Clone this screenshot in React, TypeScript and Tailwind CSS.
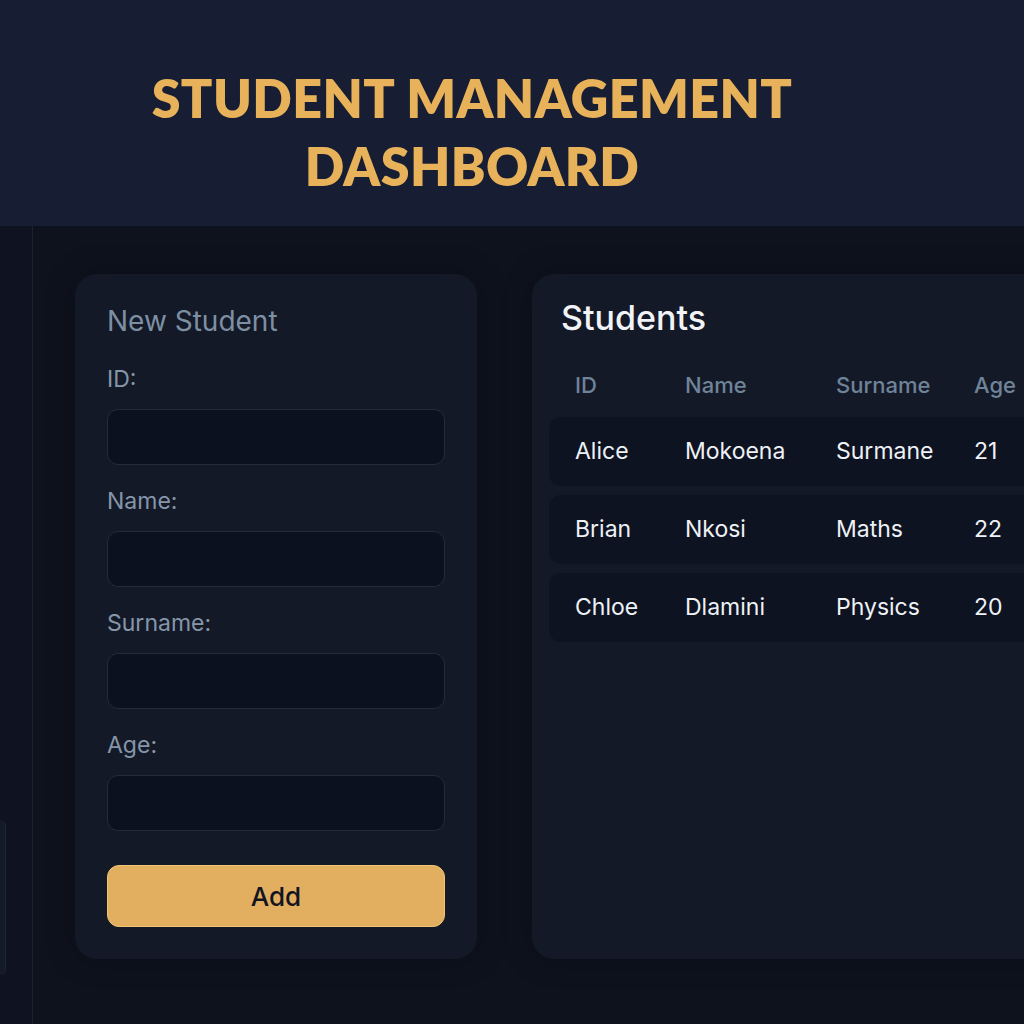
const students = [
  { id: "Alice", name: "Mokoena", surname: "Surmane", age: 21 },
  { id: "Brian", name: "Nkosi", surname: "Maths", age: 22 },
  { id: "Chloe", name: "Dlamini", surname: "Physics", age: 20 },
];

const fields = ["ID:", "Name:", "Surname:", "Age:"];

function Field({ label }: { label: string }) {
  return (
    <div className="flex flex-col">
      <label className="text-[23px] leading-[28px] text-[#8596aa] mb-4">{label}</label>
      <input
        type="text"
        className="h-[56px] w-full rounded-[11px] bg-[#0c1120] border border-[#222c3d] outline-none px-4 text-white text-lg"
      />
    </div>
  );
}

export default function App() {
  return (
    <div
      className="w-[1024px] h-[1024px] overflow-hidden bg-[#0e121d] flex flex-col"
      style={{ fontFamily: "Inter, 'Noto Sans', sans-serif" }}
    >
      {/* Header */}
      <header className="h-[226px] shrink-0 bg-[#171e33] flex items-center justify-center pr-[80px]">
        <h1
          className="text-center text-[#e8b25a] font-extrabold uppercase text-[52px] leading-[68px] tracking-[0.4px] pt-[38px]"
          style={{ fontFamily: "Lato, 'Liberation Sans', sans-serif" }}
        >
          Student Management
          <br />
          Dashboard
        </h1>
      </header>

      <div className="flex flex-1 min-h-0">
        {/* Sidebar */}
        <aside className="w-[33px] shrink-0 bg-[#0f1321] border-r border-[#1c2232] flex flex-col">
          <div className="mt-[594px] w-[6px] h-[155px] rounded-r-[14px] bg-[#141a28] border-r border-[#1d2435]" />
        </aside>

        {/* Content */}
        <main className="flex-1 flex gap-[55px] pl-[42px] pt-[48px]">
          {/* Form */}
          <section className="w-[402px] h-[685px] shrink-0 rounded-[22px] bg-[#141927] px-8 pt-[30px] pb-8 flex flex-col shadow-[0_0_30px_rgba(0,0,0,0.25)]">
            <h2 className="text-[28px] leading-[34px] text-[#7d8fa3] mb-[27px]">New Student</h2>
            <div className="flex flex-col gap-[22px]">
              {fields.map((f) => (
                <Field key={f} label={f} />
              ))}
            </div>
            <button className="mt-[34px] h-[63px] w-full rounded-[12px] bg-[#e2ae5f] border border-[#f0c474] text-[#121521] text-[26px] font-medium">
              Add
            </button>
          </section>

          {/* Students table */}
          <section className="w-[620px] h-[685px] shrink-0 rounded-[22px] bg-[#141927] px-[17px] pt-[22px] shadow-[0_0_30px_rgba(0,0,0,0.25)]">
            <h2 className="pl-3 text-[34px] leading-[44px] font-medium text-[#f1f3f7]">Students</h2>
            <div className="flex px-[26px] mt-[26px] h-[38px] items-center text-[22px] font-medium text-[#6f8399]">
              <span className="w-[110px]">ID</span>
              <span className="w-[151px]">Name</span>
              <span className="w-[138px]">Surname</span>
              <span>Age</span>
            </div>
            <div className="mt-[13px] flex flex-col gap-[9px]">
              {students.map((s) => (
                <div
                  key={s.id}
                  className="flex items-center h-[69px] px-[26px] rounded-[12px] bg-[#0e1322] text-[23px] text-[#eef1f5]"
                >
                  <span className="w-[110px]">{s.id}</span>
                  <span className="w-[151px]">{s.name}</span>
                  <span className="w-[138px]">{s.surname}</span>
                  <span>{s.age}</span>
                </div>
              ))}
            </div>
          </section>
        </main>
      </div>
    </div>
  );
}
